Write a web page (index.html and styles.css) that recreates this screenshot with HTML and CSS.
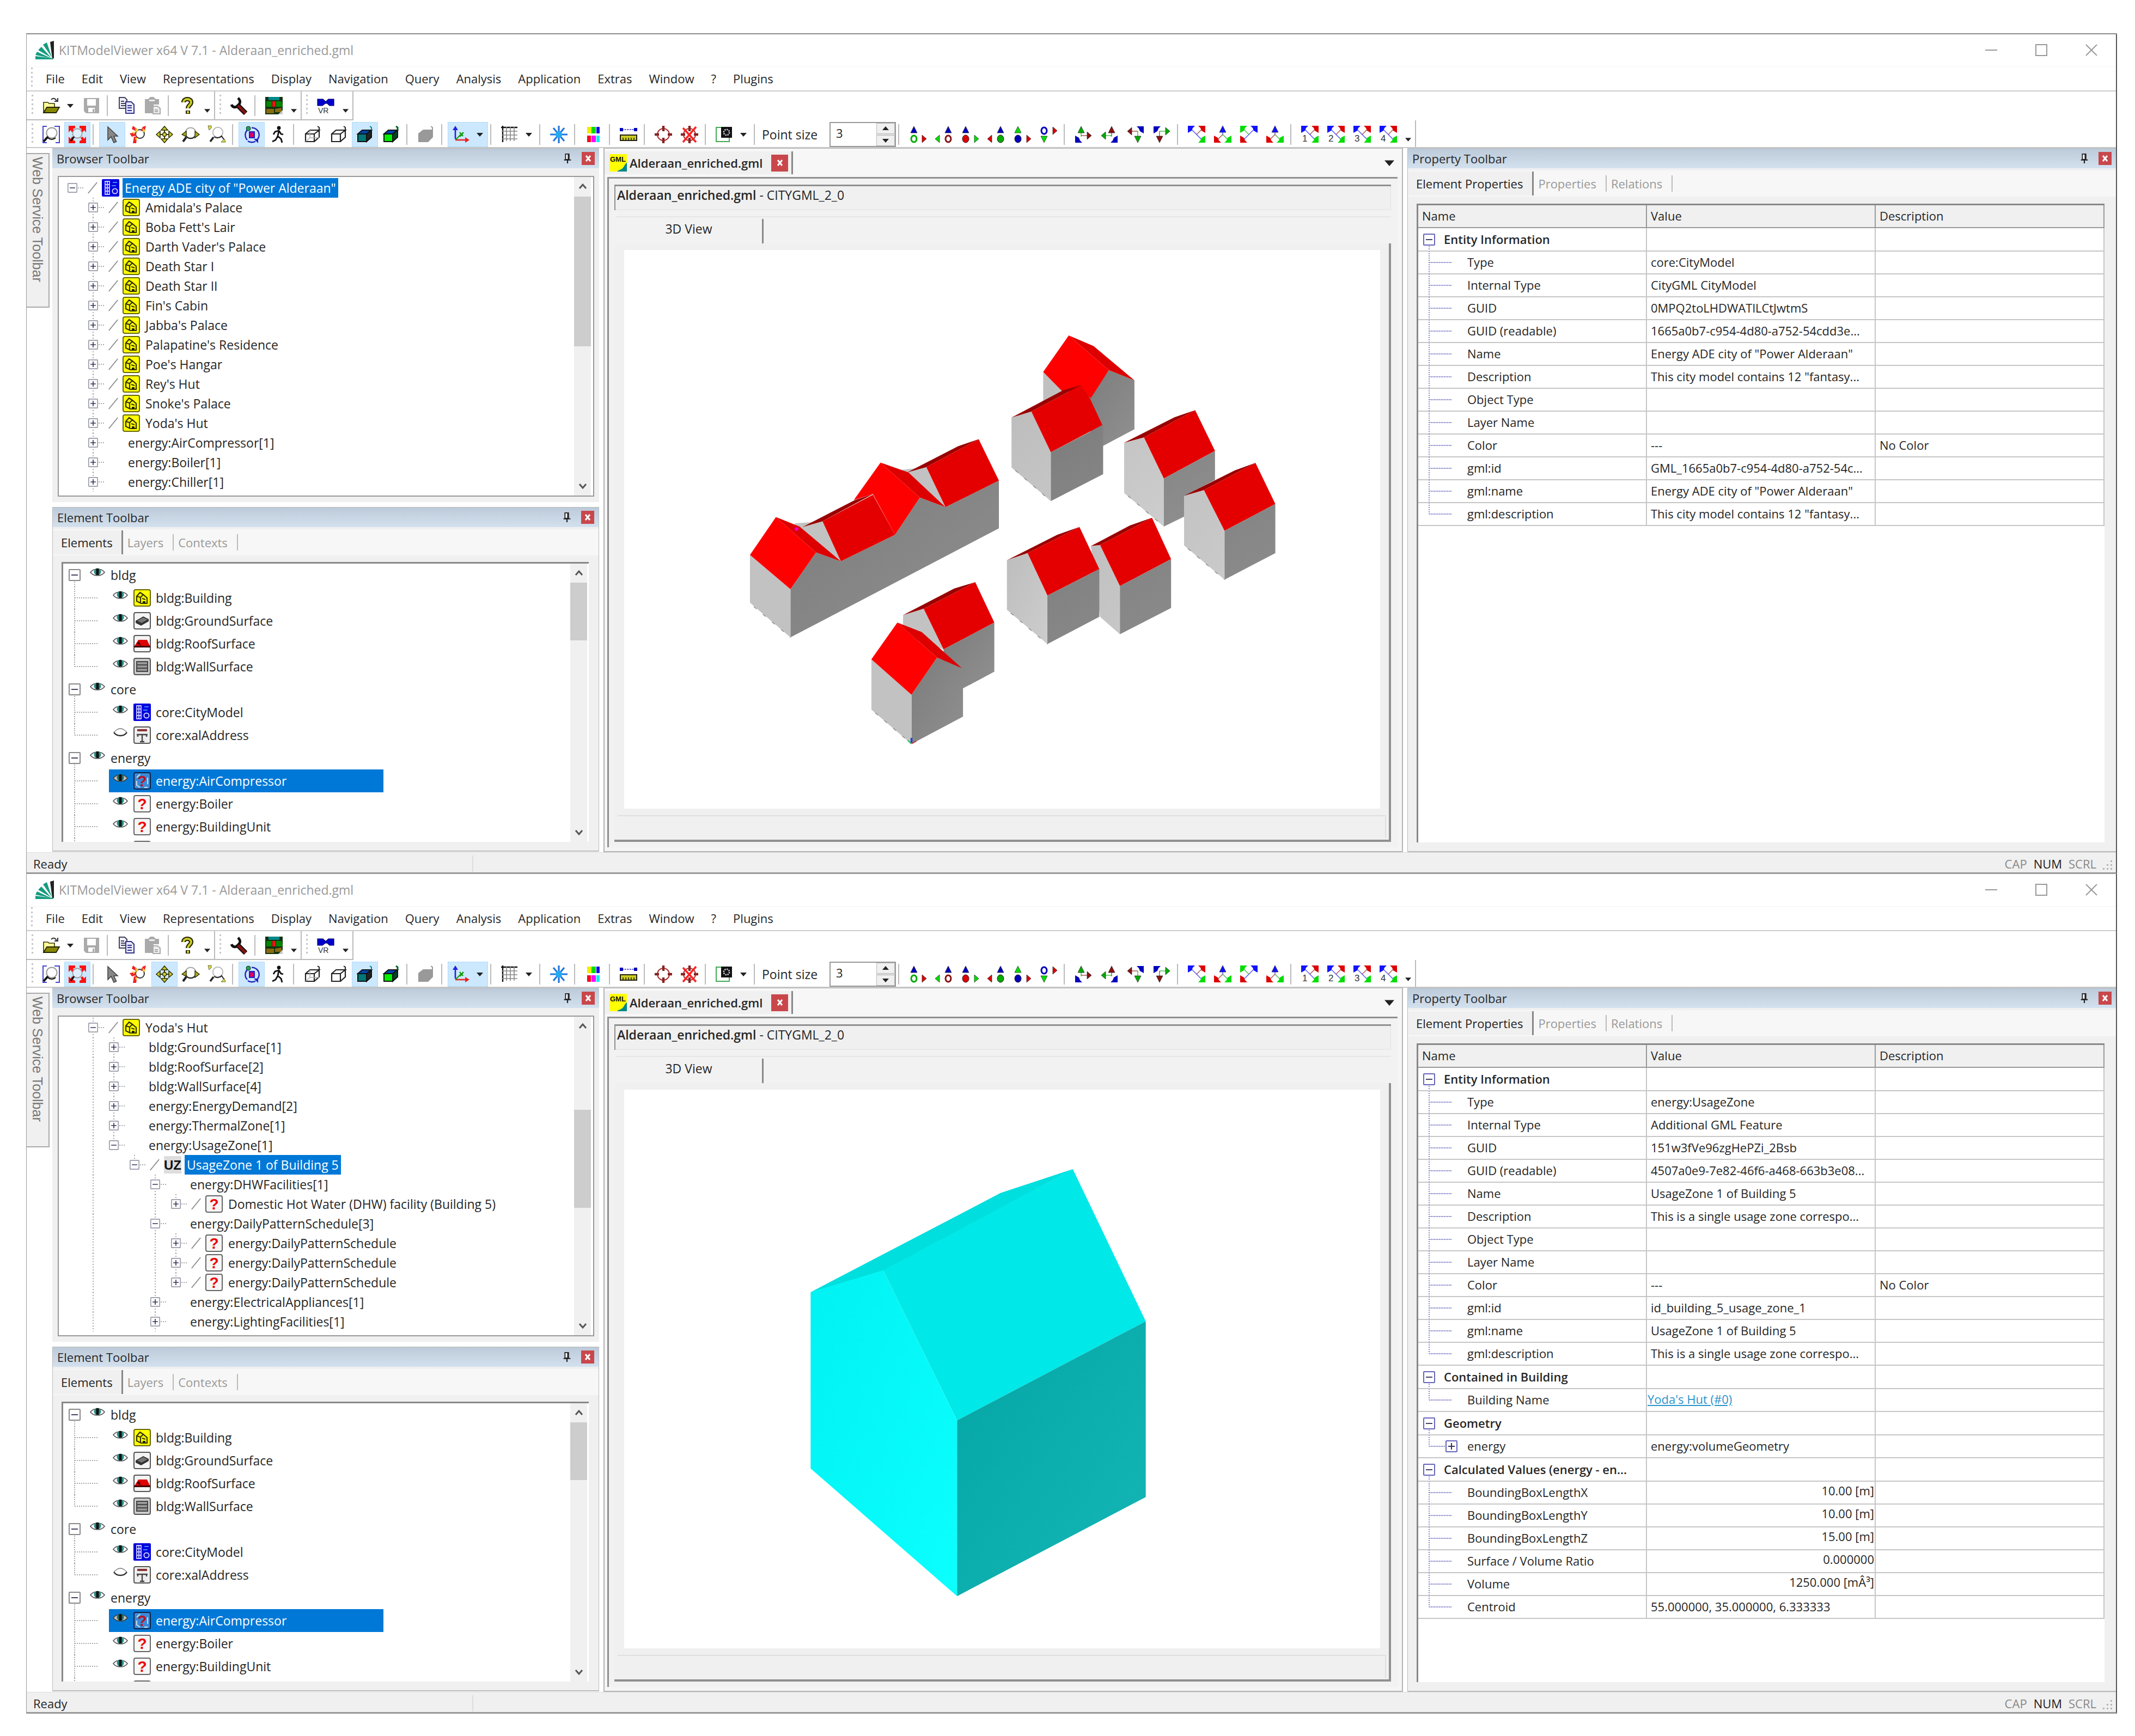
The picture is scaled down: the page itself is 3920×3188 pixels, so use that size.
FILE: index.html
```html
<!DOCTYPE html>
<html lang="en">
<head>
<meta charset="utf-8">
<title>KITModelViewer x64 V 7.1 - Alderaan_enriched.gml</title>
<link rel="stylesheet" href="styles.css">
</head>
<body>
<svg class="sprite" aria-hidden="true">
  <defs>
    <linearGradient id="wallDark" x1="0" y1="0" x2="1" y2="1"><stop offset="0" stop-color="#7c7c7c"/><stop offset="1" stop-color="#909090"/></linearGradient>
    <linearGradient id="wallLight" x1="0" y1="0" x2="1" y2="1"><stop offset="0" stop-color="#bdbdbd"/><stop offset="1" stop-color="#cdcdcd"/></linearGradient>
    <linearGradient id="cyanLight" x1="0" y1="0" x2="1" y2="1"><stop offset="0" stop-color="#00f2f2"/><stop offset="1" stop-color="#0cffff"/></linearGradient>
    <linearGradient id="cyanDark" x1="0" y1="0" x2="1" y2="1"><stop offset="0" stop-color="#05a5a5"/><stop offset="1" stop-color="#14b6b6"/></linearGradient>
  </defs>
  <symbol id="logo" viewBox="0 0 34 34"><path fill="#222" d="M27 2l7-2v32l-3 1z"/><g fill="#179b7f"><path d="M14 7l7-4 9 27z"/><path d="M5 17l6-6 18 20z"/><path d="M0 26l3-6 26 12z"/><path d="M0 28l32 4 1 2H0z"/></g></symbol>
  <symbol id="open" viewBox="0 0 16 16"><path fill="#ff9" stroke="#330" stroke-width=".8" d="M1 14V5h4l1 1h5v3"/><path fill="#880" stroke="#220" stroke-width=".9" d="M1 14.500l3-5h11.500l-3 5z"/><path fill="none" stroke="#333" d="M8 2.500c2-2 4-1 5 1M14 1v3h-3"/></symbol>
  <symbol id="save" viewBox="0 0 16 16"><path fill="#aaa" d="M1 1h14v14H3l-2-2z"/><path fill="#fff" d="M4 2h8v6H4zM5 10h6v4H5z"/><path fill="#aaa" d="M9 11h1.500v3H9z"/></symbol>
  <symbol id="copy" viewBox="0 0 16 16"><path fill="#eef" stroke="#445" d="M1.500.5h5l2 2v8h-7z"/><path stroke="#445" d="M3 4h3M3 6h4M3 8h4"/><path fill="#e8e8ff" stroke="#338" d="M7.500 4.500h5l2.500 2.500v8H7.500z"/><path stroke="#338" d="M9 8h4M9 10h4M9 12.500h4"/></symbol>
  <symbol id="paste" viewBox="0 0 16 16"><path fill="#aaa" d="M1 2h3l2-2h3l2 2h3v5h-5v8H1z"/><path fill="#eee" d="M5 2.500h5v1.500H5z"/><path fill="#eee" stroke="#aaa" d="M8.500 8.500h4l2.500 2v5H8.500z"/><path stroke="#aaa" d="M10 12h3M10 13.500h3"/></symbol>
  <symbol id="help" viewBox="0 0 16 16"><path fill="none" stroke="#220" stroke-width="4" d="M4.500 5c0-4 7-4 7 0 0 2.500-3 2.500-3 5.500M8.500 12.500v3"/><path fill="none" stroke="#cc2" stroke-width="2" d="M4.500 5c0-4 7-4 7 0 0 2.500-3 2.500-3 5.500M8.500 13v2"/></symbol>
  <symbol id="wrench" viewBox="0 0 16 16"><path fill="none" stroke="#111" stroke-width="2.400" d="M1 7c1 3 4 3 6 1s3-4 0-7"/><path stroke="#111" stroke-width="4.500" d="M6 7l8 8"/><path stroke="#811" stroke-width="2.600" d="M7 8l7 7"/></symbol>
  <symbol id="map" viewBox="0 0 16 16"><path fill="#131" d="M0 0h16v16H0z"/><path fill="#088" d="M3 0h10v3H3z"/><path fill="#080" d="M1 4h5v5H1zM10 4h5l1 5h-6z"/><path fill="#886a10" d="M1 11h7v4H1zM9 11l6-1v4H9z"/><path fill="#e11" d="M6.500 4h3v5h-3z"/><path fill="#ccc" d="M12 16l4-4v4z"/></symbol>
  <symbol id="vr" viewBox="0 0 16 16"><path fill="#00c" stroke="#006" stroke-width=".6" d="M.5 2h5l2 2h1l2-2h5v6h-4l-2-2h-2L5 8H.5z"/><text x="1" y="15" font-size="7" font-family="Liberation Sans, sans-serif" fill="#333">VR</text></symbol>
  <symbol id="zoomwin" viewBox="0 0 16 16"><path fill="none" stroke="#44c" d="M4 .5H.5v15H4M11 .5h4.500v15H12"/><circle cx="8.500" cy="6.500" r="4.800" fill="#fff" stroke="#999"/><path stroke="#111" stroke-width="2" d="M5 10l-4 4.500"/><path fill="none" stroke="#111" d="M5 11c2 2 5 2 7 0"/></symbol>
  <symbol id="zoomfit" viewBox="0 0 16 16"><path fill="#f11" d="M0 0h6v2L4 3l1 2-2 1-1-2-2 2zM16 0h-6v2l2 1-1 2 2 1 1-2 2 2zM0 16h6v-2l-2-1 1-2-2-1-1 2-2-2zM16 16h-6v-2l2-1-1-2 2-1 1 2 2-2z"/><circle cx="8" cy="7" r="4.300" fill="#def" stroke="#999" stroke-width=".8"/><path stroke="#111" stroke-width="1.600" d="M5 10l-3 4"/></symbol>
  <symbol id="pointer" viewBox="0 0 16 16"><path fill="#888" stroke="#444" stroke-width=".8" d="M4 1v12l3-3 2.500 5.500 2.300-1L9.500 9.500H13z"/></symbol>
  <symbol id="flyto" viewBox="0 0 16 16"><circle cx="9.500" cy="7.500" r="4" fill="#fff" stroke="#333"/><path fill="#e22" d="M3 0l4 3-1 2-4-2zM15 0l-1 4-4 1 2-4zM0 7l6-1v3l-4 1zM4 10h3l-1 6H3z"/><path fill="#fc3" d="M5 2l3 2-2 2zM12 2l3 3-3 1zM2 5l3 1-1 2zM5 11h2l-1 3z"/></symbol>
  <symbol id="pan" viewBox="0 0 16 16"><g fill="#cc3" stroke="#330" stroke-width=".8"><path d="M8 .5l3 3.500H5zM8 15.500L5 12h6zM.5 8L4 5v6zM15.500 8L12 11V5z"/><circle cx="8" cy="8" r="1.800"/></g><path stroke="#330" d="M8 4v2M8 10v2M4 8h2M10 8h2"/></symbol>
  <symbol id="rot" viewBox="0 0 16 16"><circle cx="8" cy="6.500" r="4.800" fill="#fff" stroke="#aaa"/><path fill="none" stroke="#222" d="M3.500 9c2 3.500 7 3.500 9 0"/><path fill="#aa2" stroke="#330" stroke-width=".7" d="M0 8l4-3v5zM16 8l-4 3V5z"/><path stroke="#222" stroke-width="2" d="M4 10.500l-3 4"/></symbol>
  <symbol id="zoomreg" viewBox="0 0 16 16"><circle cx="9" cy="6" r="4.600" fill="#fff" stroke="#bbb"/><path fill="#dd4" stroke="#663" stroke-width=".5" d="M0 0h3v2L1 4zM16 15h-4l3-3z"/><path fill="none" stroke="#222" d="M5.500 10c2 1.500 5 1.500 7-.5l2 3"/><path stroke="#222" stroke-width="1.800" d="M5 10.500l-3 4"/></symbol>
  <symbol id="orbit" viewBox="0 0 16 16"><path fill="none" stroke="#22b" stroke-width="1.200" d="M4.500 3.500a6.500 6.500 0 0 0-.5 9.500M8 1.800a6.500 6.500 0 0 1 4.500 11.500M4.500 14c2 1.400 5 1.500 7 .2"/><path fill="#a0a" stroke="#22b" d="M6 5.500h4.500v5.500H6z"/><path fill="#e04" d="M7 7h2.500v3H7z"/><circle cx="5" cy="2.500" r="2" fill="#1a5" stroke="#222" stroke-width=".5"/><path fill="#22b" d="M10 12l4 4 0-4z"/></symbol>
  <symbol id="walk" viewBox="0 0 16 16"><circle cx="9" cy="2" r="1.700" fill="#111"/><path fill="none" stroke="#111" stroke-width="1.400" d="M9 4.500l-1 5 3 2.500 1 3.500M8 9.500l-2 3.500-3 1.500M4 8l1.500-2.500L9 4.500l2 3 2 .5"/></symbol>
  <symbol id="cubewire" viewBox="0 0 16 16"><path fill="#fff" stroke="#222" stroke-width="1.100" d="M1.500 7.500h8v7h-8zM1.500 7.500l4-3.500h8.500l-4.500 3.500M14 4v6.500l-4.500 4"/><path fill="none" stroke="#aaa" stroke-width=".7" d="M5.500 4v7h8.500M5.500 11l-4 3.500"/><path fill="none" stroke="#222" d="M14 4V1.500l-1.500-1"/></symbol>
  <symbol id="cubehid" viewBox="0 0 16 16"><path fill="#fff" stroke="#222" stroke-width="1.100" d="M1.500 7.500h8v7h-8zM1.500 7.500l4-3.500h8.500l-4.500 3.500M14 4v6.500l-4.500 4"/><path fill="none" stroke="#222" d="M14 4V1.500l-1.500-1"/></symbol>
  <symbol id="cubeflat" viewBox="0 0 16 16"><path fill="#04a" stroke="#111" d="M1.500 7.500l4-3.500h8.500l-4.500 3.500z"/><path fill="#077" stroke="#111" d="M1.500 7.500h8v7h-8z"/><path fill="#222" stroke="#111" d="M14 4v6.500l-4.500 4v-7z"/><path fill="none" stroke="#088" d="M14 4V1.500l-1.500-1"/></symbol>
  <symbol id="cubeshade" viewBox="0 0 16 16"><path fill="#04a" stroke="#111" d="M1.500 7.500l4-3.500h8.500l-4.500 3.500z"/><path fill="#0e0" stroke="#111" d="M1.500 7.500h8v7h-8z"/><path fill="#042" stroke="#111" d="M14 4v6.500l-4.500 4v-7z"/><path fill="none" stroke="#063" stroke-width="1.500" d="M14 4V1.500l-1.500-1"/></symbol>
  <symbol id="cubegray" viewBox="0 0 16 16"><path fill="#999" d="M1 7l4.500-3.500H14.500v7L10 15H1z"/><path fill="none" stroke="#999" d="M14 4V1.500l-1.500-1"/></symbol>
  <symbol id="axes" viewBox="0 0 16 16"><path stroke="#22d" stroke-width="1.300" d="M3 12V2"/><path fill="#22d" d="M3 0l2.500 4h-5z"/><path stroke="#e22" stroke-width="1.300" d="M3 13h9"/><path fill="#e22" d="M16 13l-4-2.500v5z"/><path stroke="#191" d="M3 13l5-5"/><path fill="none" stroke="#191" stroke-width="1.300" d="M7 6l3 3.500M10.500 6L7 10"/></symbol>
  <symbol id="grid" viewBox="0 0 16 16"><path stroke="#111" stroke-width="1.200" d="M0 1.500h15M1.500 0v15"/><path stroke="#888" stroke-width=".8" d="M5 1v13M8.500 1v13M12 1v13M1 5h14M1 8.500h14M1 12h14"/></symbol>
  <symbol id="star" viewBox="0 0 16 16"><path stroke="#27d" stroke-width="1.600" d="M8 0v16M0 8h16M3 2l10 12M13 2L3 14"/><circle cx="8" cy="8" r="3" fill="#2ae"/></symbol>
  <symbol id="colors" viewBox="0 0 16 16"><path fill="#ee0" d="M2 1h4v6H2z"/><path fill="#0d0" d="M6 1h4v6H6z"/><path fill="#11e" d="M10.500 1h3v6h-3z"/><path fill="#f02" d="M2 9h3.500v6H2z"/><path fill="#f0f" d="M6 9h4v6H6z"/><path fill="#0ee" d="M10.500 9h3v6h-3z"/></symbol>
  <symbol id="ruler" viewBox="0 0 16 16"><path stroke="#55d" stroke-dasharray="1.500 .8" d="M2 3.500h12"/><path fill="#00b" d="M0 2h3v3H0zM13 2h3v3h-3z"/><path fill="#cc2" stroke="#221" d="M.5 8.500h15v5H.5z"/><path stroke="#221" stroke-width=".8" d="M3 11v2M5.500 11v2M8 11v2M10.500 11v2M13 11v2"/></symbol>
  <symbol id="target" viewBox="0 0 16 16"><circle cx="8" cy="8" r="5.500" fill="none" stroke="#a33"/><path stroke="#822" stroke-width="2.200" d="M8 0v5M8 11v5M0 8h4M12 8h4"/></symbol>
  <symbol id="targetx" viewBox="0 0 16 16"><circle cx="8" cy="8" r="5.500" fill="none" stroke="#a33"/><path stroke="#822" stroke-width="2.200" d="M8 0v5M8 11v5M0 8h4M12 8h4"/><path stroke="#f22" stroke-width="1.800" d="M2 2l12 13M14 1L2 15"/></symbol>
  <symbol id="gear" viewBox="0 0 16 16"><path fill="#fff" stroke="#4a5" d="M.5 1.500h12v13H.5z"/><path fill="#111" d="M5 1h10v10H5z"/><circle cx="10" cy="6" r="2.600" fill="none" stroke="#ccd" stroke-width="1.300" stroke-dasharray="1.200 .8"/></symbol>
  <symbol id="gml" viewBox="0 0 16 16"><path fill="#ff0" d="M0 0h16v16H0z"/><path fill="#088" d="M16 8v8H7c2-2 3-1 5-3s2-4 4-5z"/><text x=".5" y="6.800" font-size="6.500" font-family="Liberation Sans, sans-serif" fill="#111">GML</text></symbol>
  <symbol id="city" viewBox="0 0 16 16"><rect width="16" height="16" rx="1" fill="#00d"/><path fill="none" stroke="#ccf" stroke-width=".9" d="M3 2h4v12H3zM3 5h4M3 8h4M3 11h4M5 2v12"/><circle cx="12" cy="11" r="2.300" fill="none" stroke="#ccf"/><path stroke="#48f" stroke-width=".9" d="M10 3h4M9 6h4"/></symbol>
  <symbol id="bldg" viewBox="0 0 16 16"><rect x=".5" y=".5" width="15" height="15" rx="1.500" fill="#ff0" stroke="#660"/><path fill="none" stroke="#330" stroke-width="1.100" d="M3 6.500l3-3.500 3 2 3.500 3v5H7L3 11zM3 6.500l3.500 1L9 5M6.500 7.500V13M8 8.500l3 1"/><path fill="#221" d="M8.500 11h2.500v2H8.500z"/></symbol>
  <symbol id="ground" viewBox="0 0 16 16"><rect x=".5" y=".5" width="15" height="15" rx="1.500" fill="#f4f4f4" stroke="#555"/><path fill="#333" d="M2 8l7-4 5 2.500v2L7 12.500 2 10z"/><path fill="#777" d="M3.500 8L9 5l4 2-5.500 3z"/></symbol>
  <symbol id="roof" viewBox="0 0 16 16"><rect x=".5" y=".5" width="15" height="15" rx="1.500" fill="#f4f4f4" stroke="#555"/><path fill="#d00" d="M4.500 4.500h8L15.500 11H.5z"/><path fill="#400" d="M.5 10h15v1.500H.5zM3 8l2-2 2 4z"/></symbol>
  <symbol id="wall" viewBox="0 0 16 16"><rect x=".5" y=".5" width="15" height="15" rx="1.500" fill="#ccc" stroke="#555"/><path fill="#999" stroke="#444" d="M3 3.500h10v9H3zM3 6.500h10M3 9.500h10"/></symbol>
  <symbol id="addr" viewBox="0 0 16 16"><rect x=".5" y=".5" width="15" height="15" rx="1.500" fill="#eee" stroke="#555"/><path fill="#833" d="M3.500 2.500h9v2h-9z"/><path fill="none" stroke="#444" stroke-width="1.200" d="M3 7.500h10M8 7.500V14M6 14h4M4 7.500v2M12 7.500v2"/></symbol>
  <symbol id="unknown" viewBox="0 0 16 16"><rect x=".5" y=".5" width="15" height="15" rx="1.500" fill="#f6f6f6" stroke="#666"/><text x="8" y="13" text-anchor="middle" font-size="14" font-weight="700" font-family="Liberation Sans, sans-serif" fill="#e00">?</text></symbol>
  <symbol id="unknownsel" viewBox="0 0 16 16"><rect x=".5" y=".5" width="15" height="15" rx="1.500" fill="#3a8ad8" stroke="#124"/><path fill="none" stroke="#cde" d="M3 5l3-3M13 5v6M3 8v4l3 2M10 14h3"/><text x="8" y="13" text-anchor="middle" font-size="14" font-weight="700" font-family="Liberation Sans, sans-serif" fill="#b12">?</text></symbol>
  <symbol id="uz" viewBox="0 0 16 16"><rect width="16" height="16" fill="#ddd"/><text x="8" y="12.500" text-anchor="middle" font-size="12" font-weight="700" font-family="Liberation Sans, sans-serif" fill="#111">UZ</text></symbol>
  <symbol id="eye" viewBox="0 0 28 18"><path fill="#fff" stroke="#555" stroke-width="1.600" d="M1 9c6-8 20-8 26 0-6 8-20 8-26 0z"/><circle cx="14" cy="8" r="6.500" fill="#2a8f88"/><path fill="#111" d="M11.500 2h5v12h-5z"/></symbol>
  <symbol id="eyeoff" viewBox="0 0 28 18"><path fill="#fff" stroke="#777" stroke-width="1.400" d="M2 9c4-4 7-7 12-7s8 3 12 7"/><path fill="none" stroke="#333" stroke-width="2.400" d="M2 9c6 8 18 8 24 0"/></symbol>
  <symbol id="slash" viewBox="0 0 22 26"><path stroke="#8a8a8a" stroke-width="2" d="M2 24L20 2"/></symbol>
  <symbol id="plus" viewBox="0 0 22 22"><rect x="1" y="1" width="20" height="20" rx="1" fill="#fff" stroke="currentColor" stroke-width="2"/><path stroke="#335" stroke-width="2" d="M5 11h12M11 5v12"/></symbol>
  <symbol id="minus" viewBox="0 0 22 22"><rect x="1" y="1" width="20" height="20" rx="1" fill="#fff" stroke="currentColor" stroke-width="2"/><path stroke="#446" stroke-width="2" d="M5 11h12"/></symbol>
  <symbol id="pin" viewBox="0 0 14 22"><path fill="#fff" stroke="#222" stroke-width="2" d="M3 2h7v11H3z"/><path stroke="#222" stroke-width="3" d="M9 2v11"/><path stroke="#222" stroke-width="2.400" d="M0 14h14M7 14v7"/></symbol>
  <symbol id="cross" viewBox="0 0 24 24"><path fill="none" stroke="#fff" stroke-width="3" d="M8 7l8 10M16 7L8 17"/></symbol>
  <symbol id="down" viewBox="0 0 12 8"><path fill="#222" d="M0 1h12L6 8z"/></symbol>
  <symbol id="up" viewBox="0 0 12 8"><path fill="#222" d="M0 7h12L6 0z"/></symbol>
  <symbol id="chevup" viewBox="0 0 16 12"><path fill="none" stroke="#555" stroke-width="3" d="M2 10l6-7 6 7"/></symbol>
  <symbol id="chevdown" viewBox="0 0 16 12"><path fill="none" stroke="#555" stroke-width="3" d="M2 2l6 7 6-7"/></symbol>
  <symbol id="min" viewBox="0 0 22 22"><path stroke="#999" stroke-width="2" d="M0 11h22"/></symbol>
  <symbol id="max" viewBox="0 0 22 22"><path fill="none" stroke="#999" stroke-width="2" d="M1 1h20v20H1z"/></symbol>
  <symbol id="close" viewBox="0 0 22 22"><path stroke="#999" stroke-width="2" d="M1 1l20 20M21 1L1 21"/></symbol>
  <symbol id="grip" viewBox="0 0 18 18"><path fill="#b5b5b5" d="M14 0h3v3h-3zM14 7h3v3h-3zM14 14h3v3h-3zM7 7h3v3H7zM7 14h3v3H7zM0 14h3v3H0z"/></symbol>
  <symbol id="town" viewBox="0 0 1389 1026">
    <g transform="translate(154 121) scale(.7015 .6505)">
      <path fill="url(#wallDark)" d="M216 772l67-104 65 25 142-75 65-105 67 27 140-75v135L216 908z"/>
      <path fill="#c2c2c2" d="M110 675l106 97v136l-106-98zM225 586l75-6 48 113zM505 435l67-8 50 113z"/>
      <path fill="#900" d="M248 596l137-76 47-17-132 77zM522 442l133-74 54-20-137 79z"/>
      <path fill="#e40000" d="M300 580l132-75 58 113-142 75zM572 427l137-79 53 117-140 75z"/>
      <path fill="#f00" d="M110 675l68-107 105 100-67 104zM382 520l70-106 103 99-65 105-58-115z"/>
      <path fill="#dc0000" d="M178 568l62 27 108 98-65-25zM452 414l73 28 97 98-67-27z"/>
      <circle cx="232" cy="602" r="5" fill="#e0c"/>
      <path fill="#c0c0c0" d="M878 158l52 52-52 30z"/>
      <path fill="url(#wallDark)" d="M980 220h28l42-67 67 29v138l-82 47-55-67z"/>
      <path fill="#f00" d="M945 55l105 98-47 79-25-22-48 5-52-57z"/>
      <path fill="#dc0000" d="M945 55l65 30 107 97-67-29z"/>
      <path fill="url(#wallLight)" d="M795 287l52-17 51 115v138l-103-95zM1090 358l52-15 52 116v136l-104-95z"/>
      <path fill="#900" d="M795 287l135-77 48-15-131 75zM1090 358l132-72 54-20-134 77z"/>
      <path fill="#e40000" d="M847 270l131-75 22 37 33 76-135 77zM1142 343l134-77 52 115-134 78z"/>
      <path fill="url(#wallDark)" d="M898 385l137-77v139l-137 76zM1194 459l134-78v82l-81 47v57l-53 28z"/>
      <path fill="url(#wallLight)" d="M1247 508l52-16 54 115v138l-106-97zM1003 650l24-3 52 116v136l-52-49z"/>
      <path fill="#900" d="M1247 508l133-72 54-21-135 77zM1003 650l102-58 58-22-136 77zM783 690l132-72 58-22-136 74z"/>
      <path fill="#e40000" d="M1299 492l135-77 52 116-133 76zM1027 647l136-77 50 117-134 76zM837 670l136-74 52 119-136 75z"/>
      <path fill="url(#wallLight)" d="M783 690l54-20 52 120v137l-106-97z"/>
      <path fill="url(#wallDark)" d="M1353 607l133-76v139l-133 75zM1079 763l134-76v138l-134 74zM889 790l136-75v135l-136 77z"/>
      <path fill="#c2c2c2" d="M511 845l54-18 52 115-106-40z"/>
      <path fill="#900" d="M511 845l134-75 55-18-135 75z"/>
      <path fill="#e40000" d="M565 827l135-75 50 114-133 76z"/>
      <path fill="url(#wallDark)" d="M617 942l133-76v139l-82 47-51-60z"/>
      <path fill="url(#wallDark)" d="M533 1070l67-105 68 28v139l-135 77z"/>
      <path fill="#c2c2c2" d="M428 970l105 100v139l-105-97z"/>
      <path fill="#f00" d="M428 970l68-104 104 99-67 105z"/>
      <path fill="#dc0000" d="M496 866l64 27 105 102-65-30z"/>
      <path stroke="#24c" stroke-width="5" d="M533 1192v14"/><path stroke="#2b5" stroke-width="3" d="M523 1199l9 9"/><path stroke="#c33" stroke-width="3" d="M534 1208l12-7"/>
      <path fill="none" stroke="#888" stroke-width="2" stroke-dasharray="10 22" d="M120 821l96 87M438 1121l95 88M805 436l93 87M1100 508l94 87M1257 657l96 88M793 839l96 88"/>
    </g>
  </symbol>
  <symbol id="zone" viewBox="0 0 1389 1026">
    <g transform="translate(293 120) scale(.4592 .5357)">
      <path fill="#00dede" d="M108 470l760-340 289-82-757 350z"/>
      <path fill="#00e8e8" d="M398 395l759-347 292 522-755 340z"/>
      <path fill="url(#cyanLight)" d="M108 470l290-75 296 515v603L108 1075z"/>
      <path fill="url(#cyanDark)" d="M694 910l755-340v603l-755 340z"/>
    </g>
  </symbol>
</svg>
<main id="desktop" class="desktop"></main>
<script src="app.js"></script>
</body>
</html>
```
FILE: styles.css
```css
* { box-sizing: border-box; }
body {
  margin: 0;
  padding: 61px 33px 40px 48px;
  background: #fff;
  color: #262626;
  font: 22px/30px "Open Sans", "Noto Sans", sans-serif;
}
button, input { font: inherit; color: inherit; margin: 0; padding: 0; border: 0; background: none; border-radius: 0; }
ul { margin: 0; padding: 0; list-style: none; }
svg { display: block; flex: none; }
svg, symbol { overflow: visible; }
.sprite { position: absolute; width: 0; height: 0; }

/* window frame */
.desktop { border-top: 2px solid #8c8c8c; }
.window { border: solid #999; border-width: 0 2px 3px 1px; border-right-color: #555; }
.titlebar { display: flex; align-items: center; height: 59px; padding: 0 34px 2px 16px; color: #999; font-size: 23px; }
.titlebar h1 { flex: 1; margin: 0 0 0 9px; font: inherit; }
.titlebar svg { width: 34px; height: 34px; }
.caption { display: flex; gap: 70px; }
.caption svg { width: 22px; height: 22px; }
.menubar { display: flex; align-items: center; gap: 1px; height: 46px; padding: 0 0 2px 8px; border-top: 1px solid #f4f4f4; border-bottom: 2px solid #ccc; }
.menubar button { padding: 0 15px; }
.handle { width: 3px; height: 40px; margin-right: 9px; background: repeating-linear-gradient(#c4c4c4 0 3px, #fff 3px 8px); }
.menubar .handle { margin-right: 8px; }

/* toolbars */
.tools { display: flex; }
.strip { display: flex; align-items: center; height: 53px; padding-left: 9px; border: solid #bbb; border-width: 0 2px 2px 0; }
.tools .strip + .strip { padding-left: 8px; }
.strip.wide { width: max-content; padding-top: 3px; }
.toolrow { border-bottom: 2px solid #c8c8c8; }
.toolrow .strip { height: 49px; border-bottom: 0; }
.tool { display: flex; align-items: center; width: 48px; height: 46px; padding-left: 8px; }
.tool svg { width: 32px; height: 32px; }
.tool.drop { width: 74px; gap: 13px; }
.tool .caret { width: 12px; height: 8px; }
.tool.on { background: #cce8ff; box-shadow: inset 0 0 0 1px #b0dcfa; }
.overflow { display: flex; align-items: flex-end; width: 25px; height: 26px; padding-left: 7px; }
.overflow svg { width: 11px; height: 8px; }
.sep { width: 2px; height: 38px; margin: 0 10px 0 4px; background: #bbb; }
.point { display: flex; align-items: center; }
.point label { width: 127px; padding-left: 3px; font-size: 23px; }
.spin { display: flex; width: 122px; height: 46px; border: 2px solid #999; }
.spin input { flex: 1; min-width: 0; padding: 0 0 6px 10px; appearance: textfield; outline: 0; }
.spin input::-webkit-inner-spin-button { appearance: none; }
.spin div { display: grid; gap: 2px; width: 34px; background: #ddd; }
.spin button { display: grid; place-items: center; background: #f0f0f0; border: 1px solid #bbb; }
.spin svg { width: 12px; height: 8px; }

/* dock layout */
.docks { display: grid; grid-template-columns: 47px 1004fr 1476fr 1309fr; border-bottom: 1px solid #ddd; }
.gutter { padding-top: 9px; }
.sidetab { width: 42px; height: 284px; padding: 5px 0; border: solid #aaa; border-width: 2px 2px 2px 0; background: #f0f0f0; color: #777; font: 25px/36px "Liberation Sans", sans-serif; writing-mode: vertical-rl; text-align: start; }
.left { display: flex; flex-direction: column; gap: 9px; min-width: 0; }
.panel { background: #f0f0f0; min-width: 0; }
.panel > header { display: flex; align-items: center; height: 37px; padding: 0 8px; background: linear-gradient(#bccad9, #d3e1ef); border-top: 1px solid #bbb; }
.panel > header h2 { flex: 1; margin: 0; font: inherit; }
.pinbtn svg { width: 14px; height: 20px; }
.x { display: grid; place-items: center; width: 24px; height: 24px; margin-left: 19px; background: #c9474b; }
.x svg { width: 24px; height: 24px; }
.browser { padding-bottom: 10px; }
.viewport { display: flex; overflow: hidden; background: #fff; font-size: 23px; }
.viewport > ul { flex: 1; min-width: 0; }
.browser .viewport { height: 589px; margin: 14px 9px 0 10px; padding-right: 4px; border: 2px solid #999; }
.browser .viewport > ul { padding-top: 2px; }
.elements { padding-bottom: 16px; border: solid #bbb; border-width: 0 1px 2px; }
.elements .viewport { height: 514px; margin: 12px 18px 0 16px; padding-right: 3px; border: solid #888; border-width: 3px 0 0 3px; }
.tabs { display: flex; align-items: center; height: 48px; margin-top: 4px; background: #f7f7f7; }
.tabs button { height: 30px; padding: 0 17px 0 8px; border-right: 2px solid #bbb; color: #999; }
.tabs .active { height: 44px; padding: 0 16px 0 15px; border-right: 3px solid #888; background: #f0f0f0; color: #222; }

/* scroll bars */
.scroll { display: grid; grid-template-rows: 34px 1fr 34px; width: 31px; background: #f0f0f0; }
.scroll button { display: grid; place-items: center; }
.scroll svg { width: 16px; height: 12px; }
.thumb { background: #cdcdcd; }

/* model tree */
.row { display: flex; align-items: center; height: 36px; white-space: nowrap; }
.guide { display: grid; place-items: center; flex: none; width: 38px; height: 36px; background-repeat: no-repeat; }
.guide.full { background-image: repeating-linear-gradient(#aaa 0 2px, #fff 2px 5px); background-size: 2px 100%; background-position: center; }
.guide.upper { background-image: repeating-linear-gradient(#aaa 0 2px, #fff 2px 5px); background-size: 2px 50%; background-position: top center; }
.guide button svg { width: 18px; height: 18px; color: #99a; }
.stub { width: 10px; height: 2px; margin-left: -9px; background: repeating-linear-gradient(90deg, #aaa 0 2px, #fff 2px 4px); }
.row > .slash { width: 20px; height: 24px; margin: 0 7px; }
.row > .icon { width: 32px; height: 32px; }
.row > .name { padding: 0 4px; line-height: 36px; margin-left: 6px; }
.row > .name.plain { margin-left: 40px; }
.name.selected { background: #0078d7; color: #fff; }
.browser .row { padding-left: 6px; }

/* element tree */
.elements .row { height: 42px; }
.elements .toggle { display: grid; place-items: center; width: 42px; height: 42px; background: repeating-linear-gradient(#aaa 0 2px, #fff 2px 4px) center bottom / 2px 50% no-repeat; color: #888; }
.toggle svg { width: 22px; height: 22px; }
.eye { margin: 0 10px 10px 7px; }
.eye svg { width: 28px; height: 18px; }
.branch { flex: none; width: 63px; height: 42px; margin-right: 21px; background: repeating-linear-gradient(#aaa 0 2px, #fff 2px 4px) 20px 0 / 2px 100% no-repeat, repeating-linear-gradient(90deg, #aaa 0 2px, #fff 2px 4px) 21px 20px / 42px 2px no-repeat; }
.branch.last { background-size: 2px 50%, 42px 2px; }
.item { display: flex; align-items: center; width: 504px; height: 42px; padding-bottom: 1px; }
.item .icon { width: 32px; height: 32px; margin-right: 9px; }
.item.selected { background: #0078d7; color: #fff; }
.item.selected .eye { filter: brightness(.75); }

/* document area */
.document { display: flex; flex-direction: column; margin-left: 8px; min-width: 0; border: solid #b4b4b4; border-width: 1px 2px 2px; background: #f5f5f5; }
.doctabs { display: flex; align-items: center; height: 52px; padding-right: 14px; background: #f7f7f7; }
.doctab { display: flex; align-items: center; gap: 5px; height: 42px; margin-right: auto; padding: 0 6px 0 9px; border-right: 3px solid #888; background: #f0f0f0; font-weight: 600; }
.doctab svg { width: 32px; height: 32px; }
.doctab .x { width: 31px; height: 31px; margin-left: 11px; }
.doctab .x svg { width: 24px; height: 24px; }
.doctabs > svg { width: 18px; height: 12px; }
.frame { flex: 1; display: flex; flex-direction: column; margin: 0 8px 7px 5px; padding: 11px 12px 10px 10px; border: solid #909090; border-width: 3px 0 0 3px; background: #f2f2f2; }
.docinfo { height: 47px; margin: 0; padding: 1px 0 0 3px; border: solid #909090; border-width: 3px 0 0 2px; background: #f0f0f0; box-shadow: inset -2px -2px #e8e8e8; font-size: 23px; }
.docinfo b { font-weight: 600; }
.viewtabs { display: flex; height: 50px; margin: 11px 0 0 2px; border-top: 2px solid #e6e6e6; }
.viewtabs button { width: 272px; height: 46px; margin-top: 3px; padding-bottom: 10px; border-right: 3px solid #888; text-align: center; font-size: 23px; }
.view { flex: 1; display: flex; flex-direction: column; padding: 12px 0 0; border: solid #909090; border-width: 0 4px 4px 0; background: #f0f0f0; }
.canvas { flex: 1; min-height: 0; margin: 0 16px 0 18px; background: #fff; }
.canvas svg { width: 100%; height: 1026px; }
.viewstatus { height: 42px; margin: 12px 5px 3px 6px; border: solid #e0e0e0; border-width: 2px 2px 0 0; }

/* property panel */
.props { display: flex; flex-direction: column; margin-left: 8px; border: solid #bbb; border-width: 0 0 2px 1px; }
.props .tabs .active { padding-right: 17px; }
.sheet { flex: 1; margin: 13px 21px 16px 16px; border: solid #888; border-width: 3px 0 0 3px; background: #fff; }
table { width: 100%; border-collapse: separate; border-spacing: 0; table-layout: fixed; }
th, td { height: 42px; padding: 0 0 2px 7px; border: solid #c6c6c6; border-width: 0 2px 2px 0; text-align: left; white-space: nowrap; overflow: hidden; text-overflow: ellipsis; line-height: 30px; }
th { background: #f0f0f0; border-color: #999; font-weight: 400; }
td:first-child { padding: 0; }
.group td { height: 43px; }
.group b { font-weight: 600; }
.prop { display: flex; align-items: center; height: 40px; line-height: 28px; }
.group .prop { height: 41px; }
.label { padding-bottom: 2px; }
.prop button { display: grid; flex: none; place-items: center; width: 22px; height: 22px; color: #66b; }
.prop button svg { width: 22px; height: 22px; }
.gstart { flex: none; display: grid; justify-content: start; align-items: center; width: 47px; height: 100%; padding-left: 9px; background: repeating-linear-gradient(#88c 0 2px, #fff 2px 4px) 19px 100% / 2px 50% no-repeat; }
.gline { flex: none; display: grid; justify-content: start; align-items: center; width: 90px; height: 42px; padding-left: 50px; background: repeating-linear-gradient(#88c 0 2px, #fff 2px 4px) 19px 0 / 2px 100% no-repeat, repeating-linear-gradient(90deg, #88c 0 2px, #fff 2px 3px) 20px 20px / 42px 2px no-repeat; }
.gline.last { background-size: 2px 50%, 42px 2px; }
.link { padding: 0 0 5px 1px; }
.link a { color: #2a94cc; }
.num { padding: 0 1px 8px 0; text-align: right; }

/* status bar */
.status { display: flex; align-items: center; height: 36px; padding: 4px 6px 0 12px; background: #f0f0f0; }
.status p { width: 808px; margin: 0; border-right: 2px solid #ddd; }
.status ul { display: flex; gap: 12px; margin-left: auto; color: #888; }
.status .on { color: #222; }
.status svg { width: 18px; height: 18px; margin: 6px 0 0 12px; }
```
FILE: app.js
```js
const use = (id, cls = '') => `<svg class="${cls}" aria-hidden="true"><use href="#${id}"/></svg>`;

/* Small axis glyphs, composed from arrows, rings and corner marks on a 32px grid. */
const C = { b: '#00b', r: '#d00', g: '#0a0', d: '#811', B: '#11f', G: '#0d0' };
const mark = {
  u: (x, y) => `M${x} ${y - 7}l6 12h-12z`,
  n: (x, y) => `M${x} ${y + 6}l6-12h-12z`,
  r: (x, y) => `M${x + 5} ${y}l-8-7v14z`,
  l: (x, y) => `M${x - 5} ${y}l8-7v14z`,
  p: (x, y) => `M${x - 5} ${y - 5}h13l-4 4-2 5-7 4z`,
  q: (x, y) => `M${x + 5} ${y - 5}h-13l4 4 2 5 7 4z`,
  s: (x, y) => `M${x - 5} ${y + 5}h13l-4-4-2-5-7-4z`,
  t: (x, y) => `M${x + 5} ${y + 5}h-13l4-4 2-5 7-4z`
};
const axis = (spec) => '<svg viewBox="0 0 32 32" aria-hidden="true">' + spec.split(' ').map((part) => {
  const [k, c, x, y, z, w] = part.split(',');
  if (k === 'line') return `<path stroke="${C[c]}" stroke-width="1.5" opacity=".7" d="M${x} ${y}L${z} ${w}"/>`;
  if (k === 'ring') return `<ellipse cx="${x}" cy="${y}" rx="5" ry="6" fill="#fff" stroke="${C[c]}" stroke-width="3"/>`;
  if (k === 'dot') return `<ellipse cx="${x}" cy="${y}" rx="6" ry="7" fill="${C[c]}" stroke="#222"/>`;
  if (k === 'num') return `<text x="2" y="29" font-size="17" font-family="Liberation Sans, sans-serif" fill="#333">${c}</text>`;
  return `<path fill="${C[c]}" ${'urln'.includes(k) ? 'stroke="#222" stroke-width=".7"' : ''} d="${mark[k](+x, +y)}"/>`;
}).join('') + '</svg>';

const tri = 'line,B,6,6,26,26 line,d,26,6,16,16 p,B,5,5 q,r,27,5 t,G,27,26';
const fork = 'line,B,16,4,16,16 line,d,16,16,6,26 line,g,16,16,26,26 u,B,16,7 s,r,5,26 t,G,27,26';
const axisTools = [
  ['u,b,9,8 ring,g,9,24 r,r,27,24', 'l,G,5,24 u,b,24,8 ring,d,24,24', 'u,b,8,8 dot,r,8,24 r,G,27,24', 'l,r,5,24 u,b,24,8 dot,g,24,24', 'u,G,8,8 dot,b,8,24 r,r,27,24', 'ring,b,8,9 r,r,27,9 n,G,8,25'],
  ['line,g,12,6,12,20 line,d,12,18,24,18 u,g,12,8 r,d,26,18 s,b,6,26', 'line,d,20,6,20,20 line,g,6,18,20,18 u,d,20,8 l,g,6,18 t,b,26,26', 'line,d,6,10,20,10 line,g,20,10,20,24 l,d,6,10 q,b,26,6 n,g,20,25', 'line,g,12,10,24,10 line,d,12,10,12,24 p,b,6,6 r,g,26,10 n,d,12,25'],
  [tri, fork, 'line,B,26,6,6,26 line,g,6,6,16,16 p,G,5,5 q,B,27,5 s,r,5,26', fork],
  [1, 2, 3, 4].map((n) => `${tri} num,${n}`)
];

const sep = '<span class="sep"></span>';
const handle = '<span class="handle"></span>';
const caret = use('down', 'caret');
const more = `<button class="overflow" aria-label="Toolbar options">${use('down')}</button>`;
const tool = (id, on, drop) => `<button class="tool${on ? ' on' : ''}${drop ? ' drop' : ''}" aria-label="${id}">${use(id)}${drop ? caret : ''}</button>`;

const menu = ['File', 'Edit', 'View', 'Representations', 'Display', 'Navigation', 'Query', 'Analysis', 'Application', 'Extras', 'Window', '?', 'Plugins'];

const toolbars = (w, n) => `
  <div class="tools">
    <div class="strip">${handle}${tool('open', 0, 1)}${tool('save')}${sep}${tool('copy')}${tool('paste')}${sep}${tool('help')}${more}</div>
    <div class="strip">${handle}${tool('wrench')}${sep}${tool('map')}${more}</div>
    <div class="strip">${handle}${tool('vr')}${more}</div>
  </div>
  <div class="toolrow"><div class="strip wide">${handle}${tool('zoomwin')}${tool('zoomfit', 1)}${sep}
    ${['pointer', 'flyto', 'pan', 'rot', 'zoomreg'].map((id) => tool(id, id === w.mode)).join('')}${sep}
    ${tool('orbit', 1)}${tool('walk')}${sep}${tool('cubewire')}${tool('cubehid')}${tool('cubeflat', 1)}${tool('cubeshade')}${sep}
    ${tool('cubegray')}${sep}${tool('axes', 1, 1)}${sep}${tool('grid', 0, 1)}${sep}${tool('star')}${sep}${tool('colors')}${sep}${tool('ruler')}${sep}
    ${tool('target')}${tool('targetx')}${sep}${tool('gear', 0, 1)}${sep}
    <div class="point"><label for="ps${n}">Point size</label><div class="spin"><input id="ps${n}" type="number" value="3"><div><button aria-label="Increase">${use('up')}</button><button aria-label="Decrease">${use('down')}</button></div></div></div>
    ${axisTools.map((set) => sep + set.map((s) => `<button class="tool" aria-label="Axis orientation">${axis(s)}</button>`).join('')).join('')}${more}
  </div></div>`;

/* Tree rows: [level, expanded, icon or '', label, selected] */
const city = ["Amidala's Palace", "Boba Fett's Lair", "Darth Vader's Palace", 'Death Star I', 'Death Star II', "Fin's Cabin", "Jabba's Palace", "Palapatine's Residence", "Poe's Hangar", "Rey's Hut", "Snoke's Palace", "Yoda's Hut"];
const treeA = [[0, 1, 'city', 'Energy ADE city of "Power Alderaan"', 1],
  ...city.map((c) => [1, 0, 'bldg', c]),
  [1, 0, '', 'energy:AirCompressor[1]'], [1, 0, '', 'energy:Boiler[1]'], [1, 0, '', 'energy:Chiller[1]']];
const treeB = [[1, 1, 'bldg', "Yoda's Hut"], [2, 0, '', 'bldg:GroundSurface[1]'], [2, 0, '', 'bldg:RoofSurface[2]'], [2, 0, '', 'bldg:WallSurface[4]'],
  [2, 0, '', 'energy:EnergyDemand[2]'], [2, 0, '', 'energy:ThermalZone[1]'], [2, 1, '', 'energy:UsageZone[1]'], [3, 1, 'uz', 'UsageZone 1 of Building 5', 1],
  [4, 1, '', 'energy:DHWFacilities[1]'], [5, 0, 'unknown', 'Domestic Hot Water (DHW) facility (Building 5)'], [4, 1, '', 'energy:DailyPatternSchedule[3]'],
  [5, 0, 'unknown', 'energy:DailyPatternSchedule'], [5, 0, 'unknown', 'energy:DailyPatternSchedule'], [5, 0, 'unknown', 'energy:DailyPatternSchedule'],
  [4, 0, '', 'energy:ElectricalAppliances[1]'], [4, 0, '', 'energy:LightingFacilities[1]']];

function tree(rows, open) {
  const continues = (i, level) => {
    for (let j = i + 1; j < rows.length; j++) {
      if (rows[j][0] === level) return true;
      if (rows[j][0] < level) return false;
    }
    return open.includes(level);
  };
  return rows.map(([level, expanded, icon, label, selected], i) => {
    let html = '';
    for (let l = 0; l < level; l++) html += `<span class="guide${continues(i, l) ? ' full' : ''}"></span>`;
    const own = continues(i, level) ? ' full' : level ? ' upper' : '';
    html += `<span class="guide${own}"><button aria-label="Toggle">${use(expanded ? 'minus' : 'plus')}</button></span><span class="stub"></span>`;
    if (icon) html += use('slash', 'slash') + use(icon, 'icon');
    return `<li class="row" role="treeitem">${html}<span class="name${icon ? '' : ' plain'}${selected ? ' selected' : ''}">${label}</span></li>`;
  }).join('');
}

const elementGroups = [
  ['bldg', ['bldg', 'bldg:Building'], ['ground', 'bldg:GroundSurface'], ['roof', 'bldg:RoofSurface'], ['wall', 'bldg:WallSurface']],
  ['core', ['city', 'core:CityModel'], ['addr', 'core:xalAddress', 'off']],
  ['energy', ['unknownsel', 'energy:AirCompressor', 'sel'], ['unknown', 'energy:Boiler'], ['unknown', 'energy:BuildingUnit'], ['unknown', '']]
];
const eye = (off) => `<button class="eye" aria-label="Visibility">${use(off ? 'eyeoff' : 'eye')}</button>`;
const elementTree = elementGroups.map(([name, ...items], g) =>
  `<li class="row"><button class="toggle" aria-label="Toggle">${use('minus')}</button>${eye()}<span>${name}</span></li>` +
  items.map(([icon, label, state], i) => `<li class="row"><span class="branch${g < 2 && i === items.length - 1 ? ' last' : ''}"></span><span class="item${state === 'sel' ? ' selected' : ''}">${eye(state === 'off')}${use(icon, 'icon')}${label}</span></li>`).join('')
).join('');

/* The thumb's offset and length are given in pixels of the track. */
const scroll = (top, size) => `<div class="scroll"><button aria-label="Scroll up">${use('chevup')}</button><div><div class="thumb" style="margin-top:${top}px;height:${size}px"></div></div><button aria-label="Scroll down">${use('chevdown')}</button></div>`;

const header = (title) => `<header><h2>${title}</h2><button class="pinbtn" aria-label="Pin">${use('pin')}</button><button class="x" aria-label="Close">${use('cross')}</button></header>`;
const tabs = (...names) => `<div class="tabs" role="tablist">${names.map((n, i) => `<button role="tab"${i ? '' : ' class="active"'}>${n}</button>`).join('')}</div>`;

/* Property groups: title, then [name, value, description, kind] */
const base = (v) => ['Entity Information', ['Type', v[0]], ['Internal Type', v[1]], ['GUID', v[2]], ['GUID (readable)', v[3]], ['Name', v[4]], ['Description', v[5]],
  ['Object Type', ''], ['Layer Name', ''], ['Color', '---', 'No Color'], ['gml:id', v[6]], ['gml:name', v[4]], ['gml:description', v[5]]];
const propsA = [base(['core:CityModel', 'CityGML CityModel', '0MPQ2toLHDWATlLCtJwtmS', '1665a0b7-c954-4d80-a752-54cdd3e...', 'Energy ADE city of "Power Alderaan"', 'This city model contains 12 "fantasy...', 'GML_1665a0b7-c954-4d80-a752-54c...'])];
const propsB = [base(['energy:UsageZone', 'Additional GML Feature', '151w3fVe96zgHePZi_2Bsb', '4507a0e9-7e82-46f6-a468-663b3e08...', 'UsageZone 1 of Building 5', 'This is a single usage zone correspo...', 'id_building_5_usage_zone_1']),
  ['Contained in Building', ['Building Name', '<a href="#building">Yoda\'s Hut (#0)</a>', '', 'link']],
  ['Geometry', ['energy', 'energy:volumeGeometry', '', 'nested']],
  ['Calculated Values (energy - en...', ['BoundingBoxLengthX', '10.00 [m]', '', 'num'], ['BoundingBoxLengthY', '10.00 [m]', '', 'num'], ['BoundingBoxLengthZ', '15.00 [m]', '', 'num'],
    ['Surface / Volume Ratio', '0.000000', '', 'num'], ['Volume', '1250.000 [mÂ³]', '', 'num'], ['Centroid', '55.000000, 35.000000, 6.333333']]];
const propRows = (groups) => groups.map(([title, ...items]) =>
  `<tr class="group"><td><div class="prop"><span class="gstart"><button aria-label="Collapse">${use('minus')}</button></span><b class="label">${title}</b></div></td><td></td><td></td></tr>` +
  items.map(([name, value, desc = '', kind = ''], i) => `<tr><td><div class="prop"><span class="gline${i === items.length - 1 ? ' last' : ''}">${kind === 'nested' ? `<button aria-label="Expand">${use('plus')}</button>` : ''}</span><span class="label">${name}</span></div></td><td class="${kind}">${value}</td><td>${desc}</td></tr>`).join('')
).join('');

const windows = [
  { mode: 'pointer', tree: tree(treeA, [1]), thumb: [2, 275], scene: 'town', props: propsA },
  { mode: 'pan', tree: tree(treeB, [1, 4]), thumb: [137, 180], scene: 'zone', props: propsB }
];

document.getElementById('desktop').innerHTML = windows.map((w, n) => `
<section class="window">
  <div class="titlebar">${use('logo')}<h1>KITModelViewer x64 V 7.1 - Alderaan_enriched.gml</h1>
    <div class="caption"><button aria-label="Minimize">${use('min')}</button><button aria-label="Maximize">${use('max')}</button><button aria-label="Close">${use('close')}</button></div></div>
  <nav class="menubar">${handle}${menu.map((m) => `<button>${m}</button>`).join('')}</nav>
  ${toolbars(w, n)}
  <div class="docks">
    <div class="gutter"><button class="sidetab">Web Service Toolbar</button></div>
    <div class="left">
      <section class="panel browser">${header('Browser Toolbar')}<div class="viewport"><ul role="tree">${w.tree}</ul>${scroll(...w.thumb)}</div></section>
      <section class="panel elements">${header('Element Toolbar')}${tabs('Elements', 'Layers', 'Contexts')}<div class="viewport"><ul>${elementTree}</ul>${scroll(1, 106)}</div></section>
    </div>
    <section class="document">
      <div class="doctabs"><div class="doctab">${use('gml')}<span>Alderaan_enriched.gml</span><button class="x" aria-label="Close document">${use('cross')}</button></div>${use('down')}</div>
      <div class="frame">
        <p class="docinfo"><b>Alderaan_enriched.gml</b> - CITYGML_2_0</p>
        <div class="viewtabs"><button>3D View</button></div>
        <div class="view"><div class="canvas">${use(w.scene)}</div><div class="viewstatus"></div></div>
      </div>
    </section>
    <section class="panel props">${header('Property Toolbar')}${tabs('Element Properties', 'Properties', 'Relations')}
      <div class="sheet"><table><thead><tr><th>Name</th><th>Value</th><th>Description</th></tr></thead><tbody>${propRows(w.props)}</tbody></table></div></section>
  </div>
  <footer class="status"><p>Ready</p><ul><li>CAP</li><li class="on">NUM</li><li>SCRL</li></ul>${use('grip')}</footer>
</section>`).join('');
```
